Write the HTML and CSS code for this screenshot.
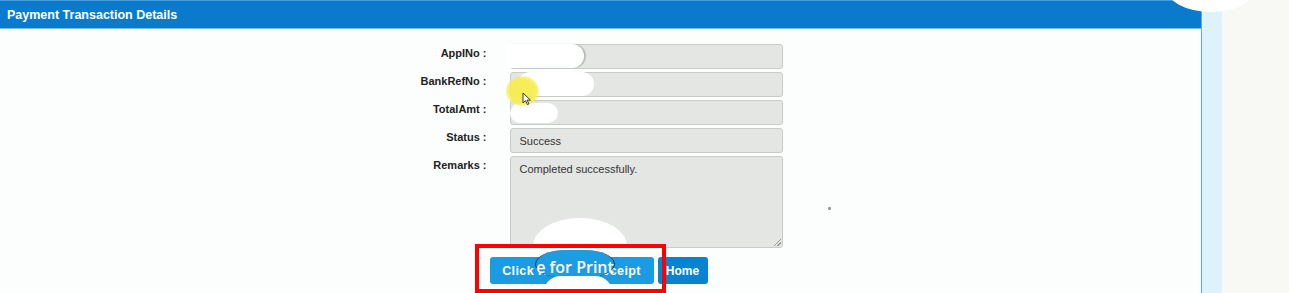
FILE: index.html
```html
<!DOCTYPE html>
<html>
<head>
<meta charset="utf-8">
<title>Payment Transaction Details</title>
<link rel="stylesheet" href="styles.css">
</head>
<body>
<div class="page">
  <div class="panel">
    <div class="panel-head">Payment Transaction Details</div>
    <div class="panel-body">
      <div class="form">
        <label class="lbl">AppINo :</label>
        <div class="field"></div>
        <label class="lbl">BankRefNo :</label>
        <div class="field"></div>
        <label class="lbl">TotalAmt :</label>
        <div class="field"></div>
        <label class="lbl">Status :</label>
        <div class="field">Success</div>
        <label class="lbl">Remarks :</label>
        <div class="field area">Completed successfully.<span class="grip"></span></div>
      </div>
      <div class="actions">
        <button class="btn btn-receipt">Click Here for Receipt</button>
        <button class="btn btn-home">Home</button>
      </div>
    </div>
  </div>
  <div class="strip"></div>
  <div class="rest"></div>

  <div class="blot blot-app"></div>
  <div class="blot blot-bank"></div>
  <div class="blot blot-amt"></div>
  <div class="blot blot-area"></div>
  <div class="blot blot-top"></div>
  <div class="cursor-glow"></div>
  <svg class="cursor" width="10" height="14" viewBox="0 0 10 14"><path d="M1 1 L1 11 L3.5 8.6 L5.4 12.6 L6.9 11.9 L5.1 8.1 L8.4 8.1 Z" fill="#fff" stroke="#222" stroke-width="0.9"/></svg>
  <div class="note"><span>e for Print</span></div>
  <div class="blot blot-note"></div>
  <div class="redbox"></div>
  <div class="speck"></div>
</div>
</body>
</html>
```

FILE: styles.css
```css
html, body {
  margin: 0;
  padding: 0;
}
body {
  background: #f8f9f6;
  font-family: "Liberation Sans", Arial, sans-serif;
  overflow: hidden;
}
.page {
  position: relative;
  display: flex;
  width: 1289px;
  height: 293px;
  overflow: hidden;
}
.panel {
  width: 1201px;
  display: flex;
  flex-direction: column;
  border-right: 1px solid #62a9dc;
  background: #fbfefc;
}
.panel-head {
  height: 27px;
  border-top: 1px solid #4d9bd6;
  background: #0a7bcc;
  color: #fff;
  font-weight: bold;
  font-size: 12.5px;
  line-height: 28px;
  padding-left: 7px;
  border-bottom: 1px solid #7fbde6;
}
.panel-body {
  display: flex;
  flex-direction: column;
  align-items: center;
  padding-top: 15px;
}
.form {
  display: grid;
  grid-template-columns: 72px 273px;
  column-gap: 23px;
  row-gap: 3px;
  margin-left: -4px;
}
.lbl {
  text-align: right;
  font-weight: bold;
  font-size: 11px;
  color: #222;
  padding-top: 3px;
  white-space: nowrap;
}
.field {
  box-sizing: border-box;
  height: 25px;
  background: #e4e6e3;
  border: 1px solid #c9cbc8;
  border-radius: 3px;
  font-size: 11px;
  color: #333;
  padding: 6px 9px;
  line-height: 12px;
}
.area {
  position: relative;
  height: 92px;
  padding-top: 6px;
}
.grip {
  position: absolute;
  right: 1px;
  bottom: 1px;
  width: 7px;
  height: 7px;
  background: linear-gradient(135deg, transparent 45%, #999 45%, #999 55%, transparent 55%, transparent 70%, #999 70%, #999 80%, transparent 80%);
}
.actions {
  display: flex;
  gap: 4px;
  margin-top: 9px;
  margin-left: -4px;
}
.btn {
  height: 27px;
  border: none;
  border-radius: 3px;
  color: #fff;
  font-family: "Liberation Sans", Arial, sans-serif;
  font-weight: bold;
  font-size: 12px;
  padding: 0;
}
.btn-receipt {
  width: 164px;
  background: #1b9be1;
  font-size: 12.5px;
  letter-spacing: 0.4px;
}
.btn-home {
  width: 50px;
  background: #0983cf;
}
.strip {
  width: 20px;
  background: #ddf3f9;
}
.rest {
  flex: 1;
  background: #f8f9f5;
}

/* scribbles over the screenshot */
.blot {
  position: absolute;
  background: #fff;
}
.blot-app {
  left: 507px;
  top: 44px;
  width: 77px;
  height: 24px;
  border-radius: 3px 12px 12px 3px;
  box-shadow: 2px 0 1px #b9bbb8;
}
.blot-bank {
  left: 518px;
  top: 72px;
  width: 76px;
  height: 24px;
  border-radius: 12px;
}
.blot-amt {
  left: 510px;
  top: 103px;
  width: 48px;
  height: 20px;
  border-radius: 10px;
}
.blot-area {
  left: 533px;
  top: 218px;
  width: 94px;
  height: 32px;
  border-radius: 46px 46px 0 0 / 28px 28px 0 0;
}
.blot-top {
  left: 1165px;
  top: -40px;
  width: 92px;
  height: 52px;
  border-radius: 50%;
}
.cursor-glow {
  position: absolute;
  left: 506px;
  top: 76px;
  width: 33px;
  height: 30px;
  border-radius: 50%;
  background: radial-gradient(ellipse, rgba(246, 236, 80, 0.95) 55%, rgba(246, 236, 80, 0.4) 75%, rgba(246, 236, 80, 0) 100%);
}
.cursor {
  position: absolute;
  left: 522px;
  top: 92px;
}
.note {
  position: absolute;
  left: 535px;
  top: 250px;
  width: 78px;
  height: 28px;
  background: #1e9ce2;
  border-left: 1.5px solid #1b3550;
  border-right: 1.5px solid #1b3550;
  border-radius: 40% 40% 40% 40% / 50% 50% 50% 50%;
  display: flex;
  align-items: center;
  justify-content: center;
}
.note span {
  color: #fff;
  font-family: "Open Sans", "Liberation Sans", sans-serif;
  font-size: 16px;
  font-weight: 600;
  white-space: nowrap;
  margin-top: 6px;
}
.blot-note {
  left: 543px;
  top: 276px;
  width: 70px;
  height: 18px;
  border-radius: 35px 35px 0 0;
}
.redbox {
  position: absolute;
  left: 475px;
  top: 244px;
  width: 183px;
  height: 41px;
  border: 4px solid #fe0000;
}
.speck {
  position: absolute;
  left: 828px;
  top: 207px;
  width: 3px;
  height: 3px;
  background: #999;
  border-radius: 1px;
}
```
